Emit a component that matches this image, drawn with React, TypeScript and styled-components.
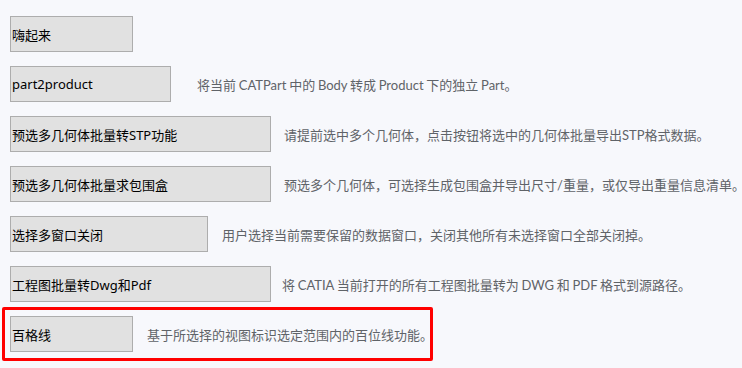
import React, { ReactElement } from "react";
import styled, { createGlobalStyle } from "styled-components";

interface Tool {
  label: string;
  width: number;
  gap: number;
  desc: string;
  highlight?: boolean;
}

const tools: Tool[] = [
  { label: "嗨起来", width: 123, gap: 0, desc: "" },
  {
    label: "part2product",
    width: 161,
    gap: 26,
    desc: "将当前 CATPart 中的 Body 转成 Product 下的独立 Part。",
  },
  {
    label: "预选多几何体批量转STP功能",
    width: 261,
    gap: 13,
    desc: "请提前选中多个几何体，点击按钮将选中的几何体批量导出STP格式数据。",
  },
  {
    label: "预选多几何体批量求包围盒",
    width: 261,
    gap: 13,
    desc: "预选多个几何体，可选择生成包围盒并导出尺寸/重量，或仅导出重量信息清单。",
  },
  {
    label: "选择多窗口关闭",
    width: 198,
    gap: 14,
    desc: "用户选择当前需要保留的数据窗口，关闭其他所有未选择窗口全部关闭掉。",
  },
  {
    label: "工程图批量转Dwg和Pdf",
    width: 261,
    gap: 11,
    desc: "将 CATIA 当前打开的所有工程图批量转为 DWG 和 PDF 格式到源路径。",
  },
  {
    label: "百格线",
    width: 123,
    gap: 14,
    desc: "基于所选择的视图标识选定范围内的百位线功能。",
    highlight: true,
  },
];

export default function App(): ReactElement {
  return (
    <>
      <GlobalStyle />
      <Root>
        {tools.map((t) => (
          <Row key={t.label} highlight={t.highlight}>
            <ToolButton width={t.width}>{t.label}</ToolButton>
            {t.desc && <Desc gap={t.gap}>{t.desc}</Desc>}
          </Row>
        ))}
      </Root>
    </>
  );
}

const GlobalStyle = createGlobalStyle`
  html, body {
    margin: 0;
    background: #f7f8fc;
  }
  body {
    font-family: "Noto Sans", "Noto Sans CJK SC", sans-serif;
  }
`;

const Root = styled.div`
  display: flex;
  flex-direction: column;
  align-items: flex-start;
  padding: 16px 0 0 10px;
  height: 368px;
  box-sizing: border-box;
`;

const Row = styled.div<{ highlight?: boolean }>`
  display: flex;
  align-items: center;
  margin-top: ${(p) => (p.highlight ? "5px" : "14px")};
  box-sizing: border-box;

  &:first-child {
    margin-top: 0;
  }

  ${(p) =>
    p.highlight &&
    `
    margin-left: -8px;
    width: 431px;
    padding: 6px 0 6px 5px;
    border: 3px solid #ff0000;
    border-radius: 2px;
  `}
`;

const ToolButton = styled.button<{ width: number }>`
  width: ${(p) => p.width}px;
  height: 36px;
  margin: 0;
  padding: 0 0 0 1px;
  background: #e1e1e1;
  border: 1px solid #adadad;
  border-radius: 0;
  text-align: left;
  font-family: "Noto Sans", "Noto Sans CJK SC", sans-serif;
  font-size: 13px;
  color: #000;
  flex-shrink: 0;
`;

const Desc = styled.span<{ gap: number }>`
  margin-left: ${(p) => p.gap}px;
  font-family: Lato, "Noto Sans CJK SC", sans-serif;
  font-size: 13px;
  word-spacing: -0.6px;
  color: #5f6368;
  white-space: nowrap;
`;
